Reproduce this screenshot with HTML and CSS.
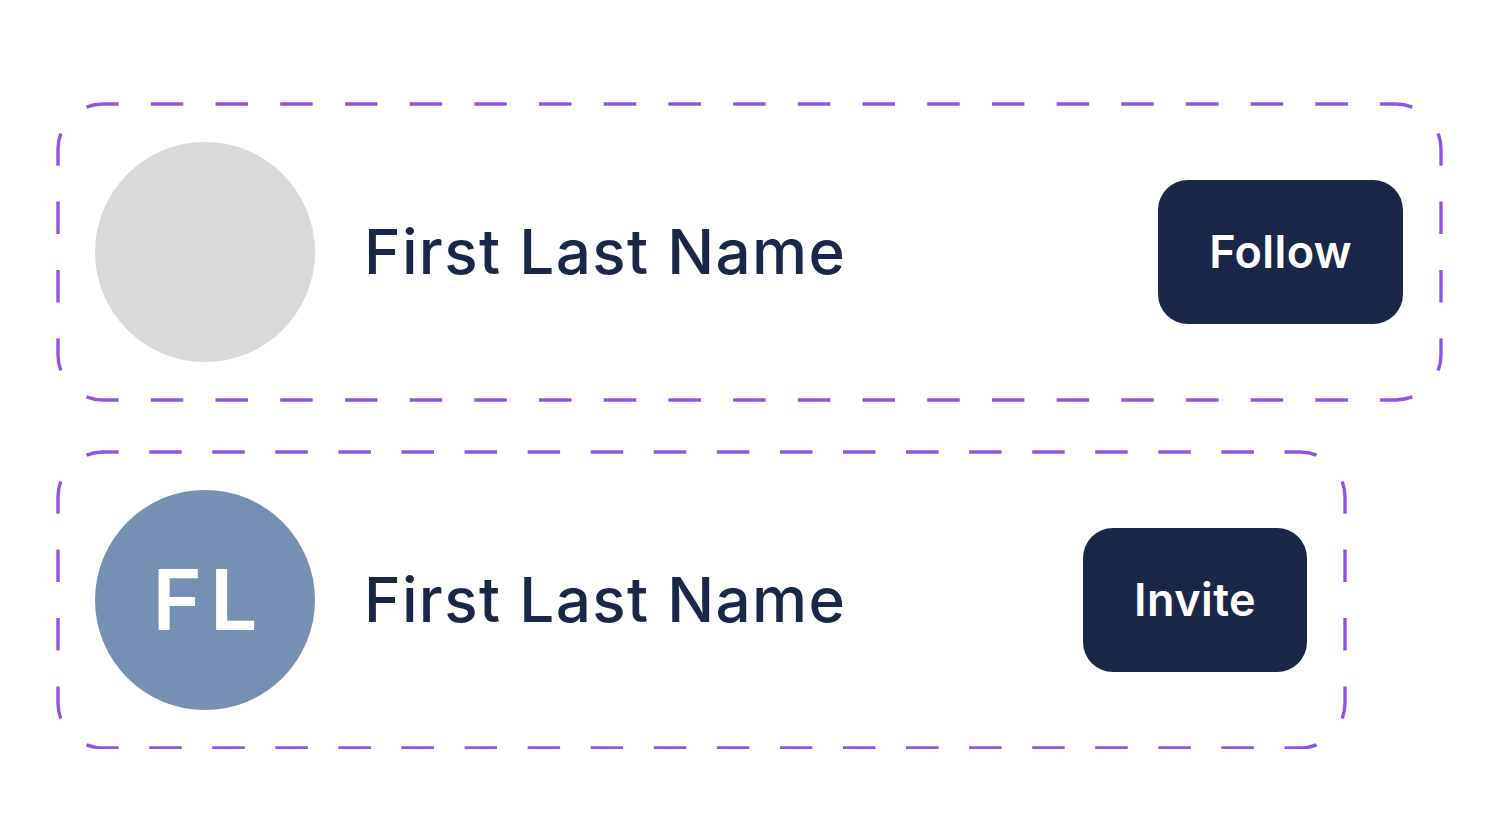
FILE: index.html
```html
<!DOCTYPE html>
<html lang="en">
<head>
<meta charset="utf-8">
<title>User rows</title>
<link rel="stylesheet" href="styles.css">
</head>
<body>
  <main class="list">
    <section class="card card-wide">
      <svg class="dash" aria-hidden="true">
        <path class="h-wide" d="M28.5 3.13 A45 45 0 0 1 45 0 H1338 A45 45 0 0 1 1354.5 3.13"/>
        <path class="h-wide" d="M28.5 292.87 A45 45 0 0 0 45 296 H1338 A45 45 0 0 0 1354.5 292.87"/>
        <path class="v" d="M2.74 29.5 A45 45 0 0 0 0 45 V251 A45 45 0 0 0 2.74 266.5"/>
        <path class="v" d="M1380.26 29.5 A45 45 0 0 1 1383 45 V251 A45 45 0 0 1 1380.26 266.5"/>
      </svg>
      <div class="avatar avatar-empty"></div>
      <span class="name">First Last Name</span>
      <button class="btn">Follow</button>
    </section>
    <section class="card card-narrow">
      <svg class="dash" aria-hidden="true">
        <path class="h-narrow" d="M28.5 3.13 A45 45 0 0 1 45 0 H1242 A45 45 0 0 1 1258.5 3.13"/>
        <path class="h-narrow" d="M28.5 292.87 A45 45 0 0 0 45 296 H1242 A45 45 0 0 0 1258.5 292.87"/>
        <path class="v" d="M2.74 29.5 A45 45 0 0 0 0 45 V251 A45 45 0 0 0 2.74 266.5"/>
        <path class="v" d="M1284.26 29.5 A45 45 0 0 1 1287 45 V251 A45 45 0 0 1 1284.26 266.5"/>
      </svg>
      <div class="avatar avatar-initials">FL</div>
      <span class="name">First Last Name</span>
      <button class="btn">Invite</button>
    </section>
  </main>
</body>
</html>
```

FILE: styles.css
```css
html, body {
  margin: 0;
  padding: 0;
  background: #ffffff;
}

body {
  font-family: "Inter", "Noto Sans", sans-serif;
  color: #1b2748;
}

.list {
  display: flex;
  flex-direction: column;
  gap: 49px;
  padding: 102px 0 0 56px;
}

.card {
  position: relative;
  box-sizing: border-box;
  height: 299px;
  display: flex;
  align-items: center;
  padding: 0 39px;
}

.card-wide { width: 1386px; }
.card-narrow { width: 1290px; }

.dash {
  position: absolute;
  top: 1.5px;
  left: 1.5px;
  width: calc(100% - 3px);
  height: calc(100% - 3px);
  overflow: visible;
  pointer-events: none;
}

.dash path {
  fill: none;
  stroke: #9055df;
  stroke-width: 3.4;
}

.dash .h-wide { stroke-dasharray: 32.5 32.2; }
.dash .h-narrow { stroke-dasharray: 32.5 30.57; }
.dash .v { stroke-dasharray: 32.5 35.9; }

.avatar {
  flex: none;
  width: 220px;
  height: 220px;
  border-radius: 50%;
  display: flex;
  align-items: center;
  justify-content: center;
}

.avatar-empty { background: #d9d9d9; }

.avatar-initials {
  background: #7590b3;
  color: #ffffff;
  font-size: 84px;
  font-weight: 600;
  letter-spacing: 8px;
  text-indent: 8px;
}

.name {
  margin-left: 49px;
  font-size: 62px;
  font-weight: 500;
  letter-spacing: 1.35px;
}

.btn {
  margin-left: auto;
  height: 144px;
  padding: 0 51px;
  border: none;
  border-radius: 30px;
  background: #1b2749;
  color: #ffffff;
  font-family: "Inter", "Noto Sans", sans-serif;
  font-size: 45px;
  font-weight: 600;
  letter-spacing: 0.4px;
}
```
